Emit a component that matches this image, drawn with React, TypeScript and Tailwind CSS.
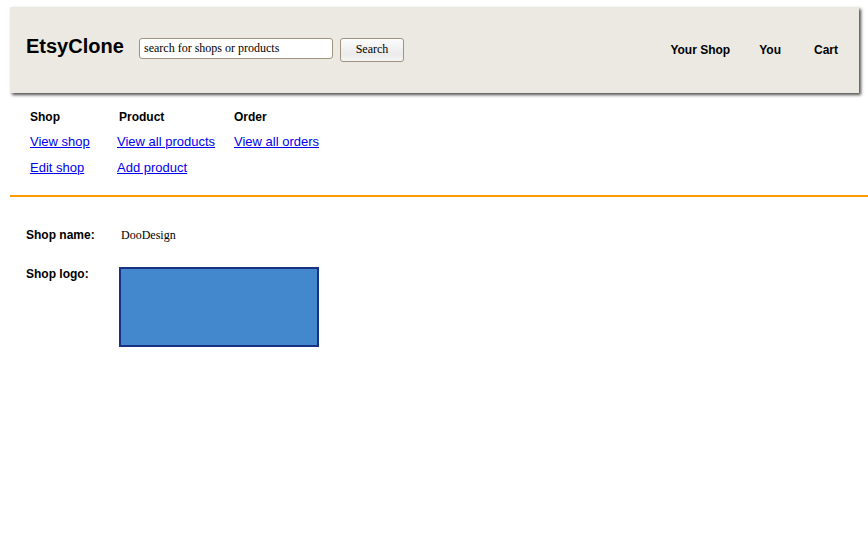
const sans = "font-['Liberation_Sans',Arial,sans-serif]";
const serif = "font-['Liberation_Serif','Times_New_Roman',serif]";

const groups = [
  { title: "Shop", width: "w-[87px]", titleClass: "", links: ["View shop", "Edit shop"] },
  { title: "Product", width: "w-[117px]", titleClass: "pl-0.5", links: ["View all products", "Add product"] },
  { title: "Order", width: "w-[120px]", titleClass: "", links: ["View all orders"] },
];

export default function App() {
  return (
    <div className={`overflow-x-hidden bg-white pt-[7px] pl-2.5 text-black ${sans}`}>
      <header className="mr-[9px] flex items-center bg-[#ece9e2] py-[27px] pr-[21px] pl-4 shadow-[2px_2px_3px_rgba(0,0,0,0.7)]">
        <h1 className="w-[113px] pb-2 text-[20px] leading-6 font-bold">EtsyClone</h1>
        <form className="flex items-start gap-[7px]" onSubmit={(e) => e.preventDefault()}>
          <input
            type="text"
            aria-label="Search"
            defaultValue="search for shops or products"
            className={`h-[21px] w-[194px] rounded-[3px] border border-[#a0937f] bg-white px-1 text-[12px] leading-4 ${serif}`}
          />
          <button
            type="submit"
            className={`h-6 w-16 rounded-[3px] border border-[#a0937f] bg-linear-to-b from-[#fcfcfc] via-[#ebebeb] via-70% to-[#f5f5f5] pb-0.5 text-[12px] leading-4 ${serif}`}
          >
            Search
          </button>
        </form>
        <nav className="ml-auto flex text-[12px] leading-4 font-bold">
          <a href="#shop" className="mr-[29px]">Your Shop</a>
          <a href="#you" className="mr-[33px]">You</a>
          <a href="#cart">Cart</a>
        </nav>
      </header>

      <nav className="flex border-b-2 border-[#ff9900] pt-4 pb-3.5 pl-5">
        {groups.map((g) => (
          <section key={g.title} className={g.width}>
            <h2 className={`text-[12px] leading-4 font-bold ${g.titleClass}`}>{g.title}</h2>
            <ul className="mt-1 text-[13px] leading-[26px] whitespace-nowrap">
              {g.links.map((l) => (
                <li key={l}>
                  <a href="#link" className="text-[#0000ee] underline">{l}</a>
                </li>
              ))}
            </ul>
          </section>
        ))}
      </nav>

      <dl className="grid grid-cols-[93px_1fr] pt-[30px] pl-4 text-[12px] leading-4">
        <dt className="pb-6 font-bold">Shop name:</dt>
        <dd className={`pl-0.5 ${serif}`}>DooDesign</dd>
        <dt className="leading-[14px] font-bold">Shop logo:</dt>
        <dd>
          <div role="img" aria-label="Shop logo" className="h-20 w-[200px] border-2 border-[#183283] bg-[#4387cd]" />
        </dd>
      </dl>
    </div>
  );
}
